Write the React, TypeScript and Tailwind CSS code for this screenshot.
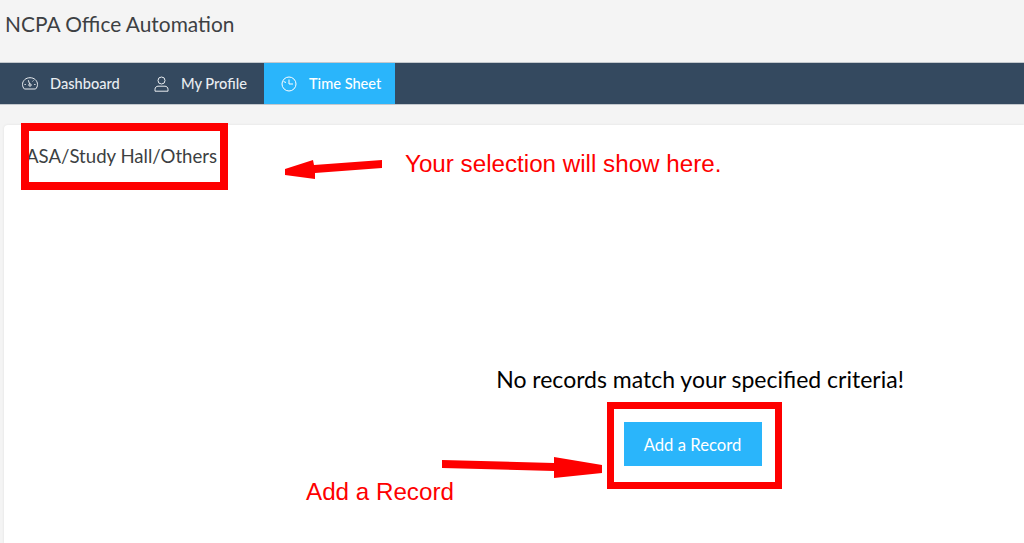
import React from 'react';

const navItemClass = "flex items-center h-full text-[14.600px] font-medium text-[#e9edf1]";

const GaugeIcon = () => (
    <svg width="16" height="13" viewBox="0 0 16 13" fill="none" stroke="currentColor" strokeWidth="1" className="shrink-0">
        <path d="M2.400 12h11.200c1.200-1.200 1.900-2.800 1.900-4.500C15.500 3.600 12.100.7 8 .7S.5 3.600.5 7.500c0 1.700.700 3.300 1.900 4.500z" />
        <circle cx="8" cy="8" r="1.200" />
        <path d="M7.600 6.900 6.300 3.200M2.500 7.500h1.300M12.200 7.500h1.300M11.400 3.500l-.8.900" />
    </svg>
);

const UserIcon = () => (
    <svg width="15" height="16" viewBox="0 0 15 16" fill="none" stroke="currentColor" strokeWidth="1" className="shrink-0">
        <circle cx="7.500" cy="4.500" r="3.500" />
        <path d="M1 15.200v-2c0-1.700 1.400-3 3-3h7c1.600 0 3 1.300 3 3v2z" />
    </svg>
);

const ClockIcon = () => (
    <svg width="16" height="16" viewBox="0 0 16 16" fill="none" stroke="currentColor" strokeWidth="1" className="shrink-0">
        <circle cx="8" cy="8" r="7" />
        <path d="M8 3.500V8h4M2.500 5.500 5 6.500" />
    </svg>
);

export default function App() {
    return (
        <div className="relative w-[1024px] h-[543px] overflow-hidden bg-[#f4f4f4] font-['Lato','Liberation_Sans',sans-serif]">
            <div className="h-[62px] pl-[5px] pt-[9px] text-[20.900px] leading-[30px] text-[#3d4043]">NCPA Office Automation</div>

            <nav className="flex h-[43px] items-stretch bg-[#34495f] border-y border-[#c3c8cd]">
                <div className={`${navItemClass} pl-[22px] gap-[12px] w-[132px]`}><GaugeIcon />Dashboard</div>
                <div className={`${navItemClass} pl-[22px] gap-[12px] w-[132px]`}><UserIcon />My Profile</div>
                <div className={`${navItemClass} pl-[17px] gap-[12px] w-[131px] bg-[#2ab5fb] text-white`}><ClockIcon />Time Sheet</div>
            </nav>

            <main className="ml-[4px] mt-[20px] h-[420px] rounded-tl-[4px] bg-white shadow-[0_0_3px_rgba(0,0,0,0.08)]">
                <h1 className="pl-[22px] pt-[18px] text-[18.600px] leading-[26px] text-[#3c3f42]">ASA/Study Hall/Others</h1>
                <div className="flex flex-col items-center w-[1020px] pl-[372px] pt-[195px]">
                    <p className="text-[23px] leading-[30px] text-black whitespace-nowrap">No records match your specified criteria!</p>
                    <button className="mt-[28px] mr-[15px] w-[138px] h-[44px] pt-[4px] bg-[#2ab5fb] text-[16.700px] text-white">Add a Record</button>
                </div>
            </main>

            {/* red markup drawn over the screenshot */}
            <div className="absolute left-[21px] top-[123px] w-[207px] h-[67px] border-[8px] border-[#fe0000]" />
            <div className="absolute left-[607px] top-[402px] w-[175px] h-[87px] border-[7px] border-[#fe0000]" />
            <svg className="absolute left-[280px] top-[150px]" width="110" height="35" viewBox="0 0 110 35">
                <path d="M5 19 33 10 34 15 102 10 102 18 35 23 35 29 5 25z" fill="#fe0000" />
            </svg>
            <svg className="absolute left-[438px] top-[450px]" width="170" height="35" viewBox="0 0 170 35">
                <path d="M4 10 116 13 116 7 164 15 164 23 116 28 116 21 4 18z" fill="#fe0000" />
            </svg>
            <span className="absolute left-[405px] top-[150px] font-['Liberation_Sans',sans-serif] text-[24.200px] leading-[28px] text-[#fe0000] whitespace-nowrap">Your selection will show here.</span>
            <span className="absolute left-[306px] top-[478px] font-['Liberation_Sans',sans-serif] text-[24.200px] leading-[28px] text-[#fe0000] whitespace-nowrap">Add a Record</span>
        </div>
    );
}
